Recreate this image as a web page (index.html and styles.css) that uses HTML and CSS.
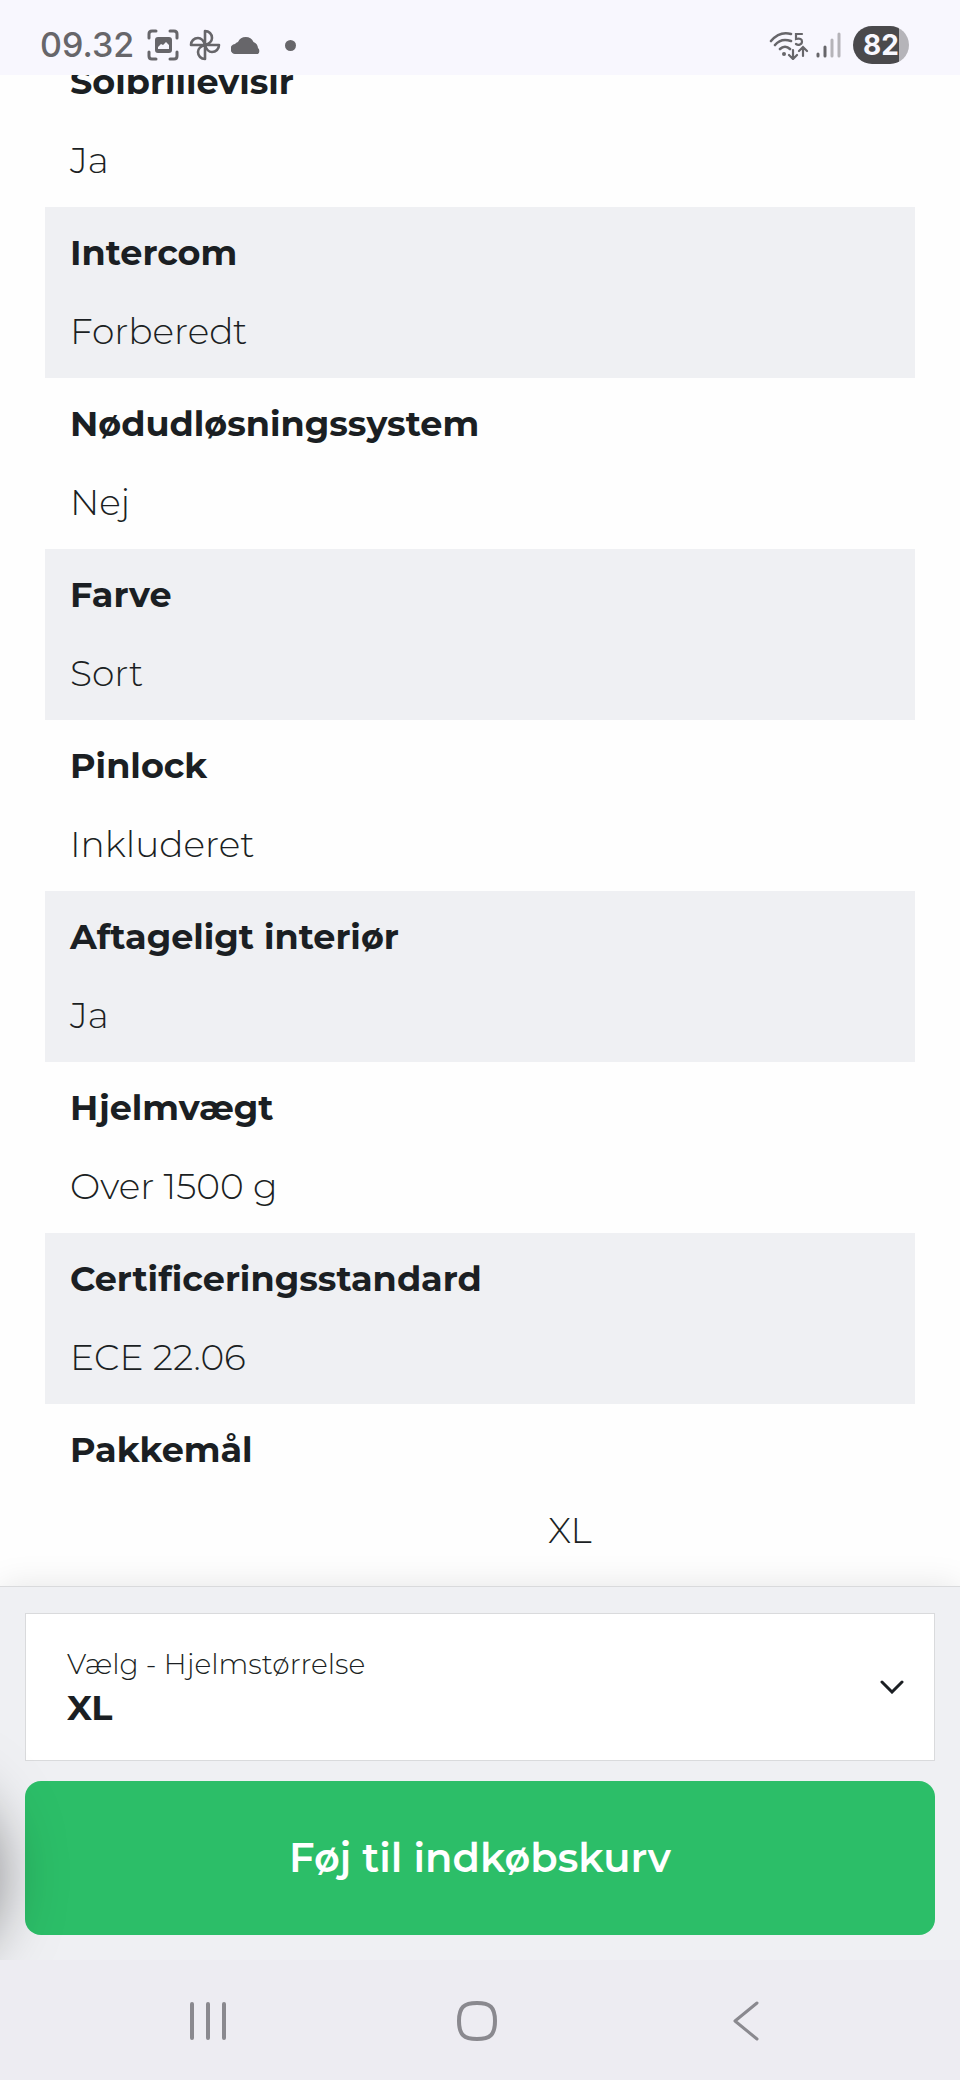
FILE: index.html
```html
<!DOCTYPE html>
<html lang="da">
  <head>
    <meta charset="UTF-8" />
    <meta name="viewport" content="width=device-width, initial-scale=1.0" />
    <title>Hjelm - Specifikationer</title>

    <link rel="stylesheet" href="styles.css">
  </head>
  <body>
    <header class="status-bar">
      <span class="time">09.32</span>
      <svg class="status-icon" width="32" height="32" viewBox="0 0 32 32" fill="none">
        <path d="M2 9V5q0-3 3-3h4M23 2h4q3 0 3 3v4M30 23v4q0 3-3 3h-4M9 30H5q-3 0-3-3v-4" stroke="#67666a" stroke-width="3" stroke-linecap="round" />
        <path fill-rule="evenodd" d="M11 8h11q3 0 3 3v10q0 3-3 3H11q-3 0-3-3V11q0-3 3-3zM11 20h11v-4l-3-3-3 3-2-1-3 3z" fill="#67666a" />
      </svg>
      <svg class="status-icon" width="32" height="32" viewBox="0 0 32 32" fill="none" stroke="#67666a" stroke-width="2.6" stroke-linejoin="round">
        <path d="M16 16V2c4 0 7 3 7 7 0 3-3 6-7 7" />
        <path d="M16 16h14c0 4-3 7-7 7-3 0-6-3-7-7" />
        <path d="M16 16v14c-4 0-7-3-7-7 0-3 3-6 7-7" />
        <path d="M16 16H2c0-4 3-7 7-7 3 0 6 3 7 7" />
      </svg>
      <svg class="status-icon" width="32" height="18" viewBox="0 0 32 18" fill="#67666a">
        <path d="M5 18a5 5 0 0 1-1-10 5 5 0 0 1 3-2 8.500 8.500 0 0 1 15.500 0 7 7 0 0 1 4.500 6 4 4 0 0 1 0 6z" />
      </svg>
      <span class="more-dot"></span>

      <svg class="wifi" width="40" height="30" viewBox="0 0 40 30" fill="none" stroke="#67666a" stroke-width="2.600" stroke-linecap="round">
        <path d="M2 11C8 4 15 2 22 4M6 15c4-5 10-6 16-4M11 19c3-3 7-3 10 0" />
        <circle cx="15" cy="24" r="2" fill="#67666a" stroke="none" />
        <path d="M33 4h-6v5c4-1 6 0 6 2.500 0 3.500-4 4-6 2.500M24 20v9M20 25l4 4 4-4M34 26v-9M30 21l4-4 4 4" stroke-width="2.200" />
      </svg>
      <svg class="signal" width="26" height="28" viewBox="0 0 26 28" stroke-width="3" stroke-linecap="round">
        <path d="M3 23v2M10 16v9" stroke="#67666a" />
        <path d="M17 9v16M24 3v22" stroke="#b5b4b9" />
      </svg>
      <span class="battery">82</span>
    </header>

    <main class="content">
      <table class="specs">
        <tr>
          <th scope="row">Solbrillevisir</th>
          <td>Ja</td>
        </tr>
        <tr>
          <th scope="row">Intercom</th>
          <td>Forberedt</td>
        </tr>
        <tr>
          <th scope="row">Nødudløsningssystem</th>
          <td>Nej</td>
        </tr>
        <tr>
          <th scope="row">Farve</th>
          <td>Sort</td>
        </tr>
        <tr>
          <th scope="row">Pinlock</th>
          <td>Inkluderet</td>
        </tr>
        <tr>
          <th scope="row">Aftageligt interiør</th>
          <td>Ja</td>
        </tr>
        <tr>
          <th scope="row">Hjelmvægt</th>
          <td>Over 1500 g</td>
        </tr>
        <tr>
          <th scope="row">Certificeringsstandard</th>
          <td>ECE 22.06</td>
        </tr>
        <tr>
          <th scope="row">Pakkemål</th>
          <td class="sizes"><span></span><span class="size">XL</span></td>
        </tr>
      </table>
    </main>

    <section class="buy-box">
      <div class="size-picker">
        <label for="size">Vælg - Hjelmstørrelse</label>
        <select id="size" name="size">
          <option>XL</option>
        </select>
        <svg class="chevron" width="24" height="14" viewBox="0 0 24 14" fill="none" stroke="#1b1f23" stroke-width="3" stroke-linecap="round">
          <path d="M2 2l10 10L22 2" />
        </svg>
      </div>
      <button type="button" class="add-to-cart">Føj til indkøbskurv</button>
      <!-- chat bubble parked outside the left edge, only its shadow shows -->
      <div class="chat-bubble"></div>
    </section>

    <nav class="nav-bar">
      <button type="button" aria-label="Seneste">
        <svg width="42" height="42" viewBox="0 0 42 42" fill="none" stroke="#8a898f" stroke-width="4" stroke-linecap="round">
          <path d="M5 4v34M21 4v34M37 4v34" />
        </svg>
      </button>
      <button type="button" aria-label="Hjem">
        <svg width="42" height="42" viewBox="0 0 42 42" fill="none" stroke="#8a898f" stroke-width="4">
          <path d="M21 3c13 0 18 4 18 18s-5 18-18 18S3 35 3 21 8 3 21 3z" />
        </svg>
      </button>
      <button type="button" aria-label="Tilbage">
        <svg width="42" height="42" viewBox="0 0 42 42" fill="none" stroke="#8a898f" stroke-width="3" stroke-linecap="round" stroke-linejoin="round">
          <path d="M32 3L10 21l22 18" />
        </svg>
      </button>
    </nav>
  </body>
</html>
```
FILE: styles.css
```css
* {
  box-sizing: border-box;
}
body {
  margin: 0;
  height: 100vh;
  display: flex;
  flex-direction: column;
  font-family: Montserrat, Inter, sans-serif;
  font-size: 35px;
  font-variant-ligatures: none;
  line-height: 54px;
  color: #1b1f23;
  background-color: #fefefe;
}

.status-bar {
  position: relative;
  z-index: 1;
  flex: none;
  display: flex;
  align-items: center;
  height: 75px;
  padding: 15px 51px 0 40px;
  font-family: Inter, sans-serif;
  color: #67666a;
  background-color: #f8f7fe;
}
.time {
  width: 93px;
  margin-right: 14px;
  font-size: 34px;
  font-weight: 500;
}
.status-icon {
  margin-right: 10px;
}
.more-dot {
  width: 11px;
  height: 11px;
  margin-left: 12px;
  border-radius: 50%;
  background-color: #67666a;
}
.wifi {
  margin-left: auto;
}
.signal {
  margin: 0 12px 0 6px;
}
.battery {
  width: 56px;
  height: 38px;
  border-radius: 19px;
  font-size: 28px;
  font-weight: 700;
  line-height: 38px;
  text-align: center;
  color: #f8f7fe;
  background: linear-gradient(to right, #4a494c 82%, #b5b4b9 82%);
}

.content {
  flex: 1;
  min-height: 0;
  overflow: hidden;
  padding: 0 45px;
}

/* first row is scrolled partly under the status bar */
.specs {
  display: block;
  margin-top: -39px;
}
.specs tbody,
.specs tr,
.specs th,
.specs td {
  display: block;
}
.specs tr:nth-child(even) {
  background-color: #eff0f3;
}
.specs th {
  padding: 19px 25px 12px;
  font-weight: 700;
  text-align: left;
}
.specs td {
  padding: 12px 25px 20px;
  font-size: 36px;
  font-weight: 300;
}
.specs .sizes {
  display: grid;
  grid-template-columns: 1fr 1fr;
  padding-top: 14px;
}
.size {
  padding-left: 68px;
}

.buy-box {
  position: relative;
  flex: none;
  clip-path: inset(-40px 0 0);
  padding: 26px 25px 25px;
  border-top: 1px solid #d9dadc;
  background-color: #eff0f3;
  box-shadow: 0 0 32px rgba(0, 0, 0, 0.1);
}
.size-picker {
  position: relative;
  display: flex;
  flex-direction: column;
  height: 148px;
  padding: 28px 41px;
  margin-bottom: 20px;
  border: 1px solid #d9dadc;
  background-color: white;
}
.size-picker label {
  font-size: 28px;
  font-weight: 300;
  line-height: 44px;
}
.size-picker select {
  appearance: none;
  width: 100%;
  padding: 0;
  border: 0;
  font: inherit;
  font-weight: 700;
  line-height: 44px;
  color: inherit;
  background: none;
}
.chevron {
  position: absolute;
  top: 66px;
  right: 30px;
  pointer-events: none;
}
.add-to-cart {
  display: block;
  width: 100%;
  height: 154px;
  border: 0;
  border-radius: 16px;
  font: inherit;
  font-size: 40px;
  font-weight: 600;
  color: white;
  background-color: #2cbe68;
}
.chat-bubble {
  position: absolute;
  bottom: 0;
  left: -180px;
  width: 170px;
  height: 170px;
  border-radius: 50%;
  box-shadow: 0 0 64px 6px rgba(0, 0, 0, 0.5);
  pointer-events: none;
}

.nav-bar {
  position: relative;
  flex: none;
  display: flex;
  height: 120px;
  padding: 2px 80px 0 73px;
  background-color: #edecf2;
}
.nav-bar button {
  flex: 1;
  display: flex;
  align-items: center;
  justify-content: center;
  border: 0;
  background: none;
}
```
